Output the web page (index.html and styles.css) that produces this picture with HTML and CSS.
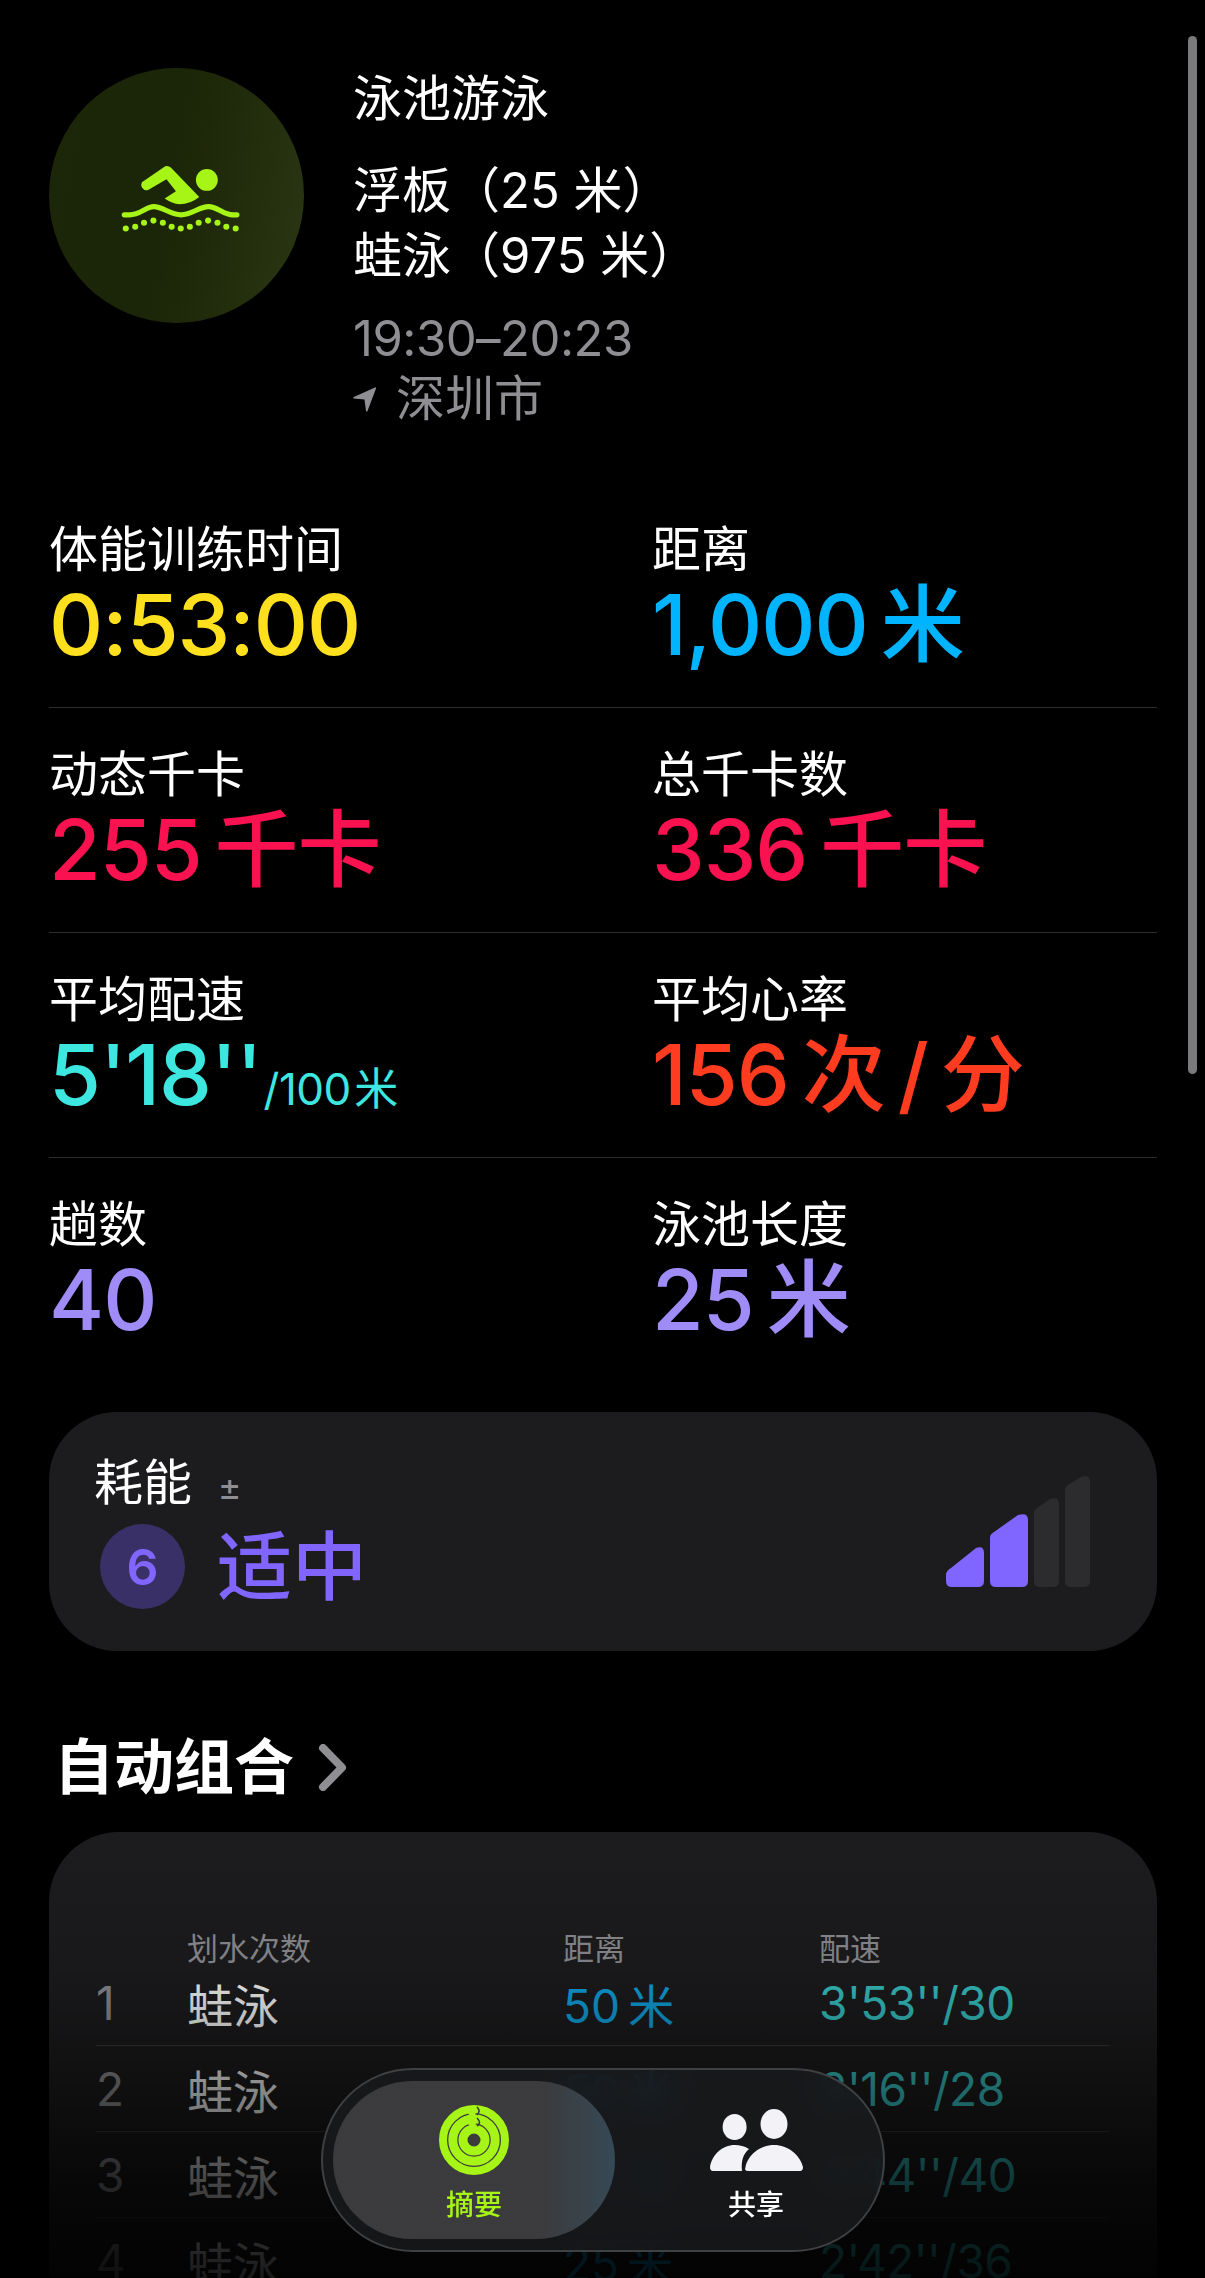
FILE: index.html
```html
<!DOCTYPE html>
<html lang="zh-CN">
<head>
    <meta charset="UTF-8">
    <meta name="viewport" content="width=device-width, initial-scale=1.0">
    <title>泳池游泳</title>
    <link rel="stylesheet" href="styles.css">
</head>
<body>
    <div class="page">
        <header class="summary">
            <div class="activity-icon">
                <svg viewBox="0 0 840 840" width="280" height="280">
                    <path fill="#a6f516" d="M306 375 L378 325 Q390 317 402 327 L495 423 Q465 447 430 447 Q405 445 381 428 L418 404 L387 365 L328 399 Q315 405 306 392 Q302 382 306 375 Z"/>
                    <circle fill="#a6f516" cx="520" cy="367" r="36"/>
                    <path fill="none" stroke="#a6f516" stroke-width="17" stroke-linecap="round" d="M248 482 H265 C300 482 320 455 345 455 C375 455 400 482 435 482 C470 482 495 455 525 455 C555 455 575 482 605 482 H619"/>
                    <g fill="#a6f516">
                        <circle cx="253" cy="527" r="10"/>
                        <circle cx="284" cy="521" r="10"/>
                        <circle cx="313" cy="508" r="10"/>
                        <circle cx="344" cy="501" r="10"/>
                        <circle cx="375" cy="508" r="10"/>
                        <circle cx="404" cy="521" r="10"/>
                        <circle cx="434" cy="527" r="10"/>
                        <circle cx="464" cy="521" r="10"/>
                        <circle cx="493" cy="508" r="10"/>
                        <circle cx="524" cy="501" r="10"/>
                        <circle cx="555" cy="508" r="10"/>
                        <circle cx="584" cy="521" r="10"/>
                        <circle cx="615" cy="527" r="10"/>
                    </g>
                </svg>
            </div>
            <div class="summary-text">
                <div class="summary-title">泳池游泳</div>
                <div class="summary-sets">
                    <div>浮板（25 米）</div>
                    <div>蛙泳（975 米）</div>
                </div>
                <div class="summary-time">19:30–20:23</div>
                <div class="summary-place">
                    <svg viewBox="0 0 23 25" width="23" height="25"><path fill="#8e8e93" d="M22 0.5 Q23.5 0 23 1.5 L14.5 24 Q13.5 25.5 13 24 L11.5 12.5 L0.8 11.5 Q-0.5 11 0.8 10 Z"/></svg>
                    <span>深圳市</span>
                </div>
            </div>
        </header>

        <section class="metrics">
            <div class="metric-row">
                <div class="metric">
                    <div class="metric-label">体能训练时间</div>
                    <div class="metric-value yellow">0:53:00</div>
                </div>
                <div class="metric">
                    <div class="metric-label">距离</div>
                    <div class="metric-value blue">1,000 米</div>
                </div>
            </div>
            <div class="metric-row">
                <div class="metric">
                    <div class="metric-label">动态千卡</div>
                    <div class="metric-value pink">255 千卡</div>
                </div>
                <div class="metric">
                    <div class="metric-label">总千卡数</div>
                    <div class="metric-value pink">336 千卡</div>
                </div>
            </div>
            <div class="metric-row">
                <div class="metric">
                    <div class="metric-label">平均配速</div>
                    <div class="metric-value teal">5'18''<small>/100 米</small></div>
                </div>
                <div class="metric">
                    <div class="metric-label">平均心率</div>
                    <div class="metric-value red">156 次 / 分</div>
                </div>
            </div>
            <div class="metric-row">
                <div class="metric">
                    <div class="metric-label">趟数</div>
                    <div class="metric-value purple">40</div>
                </div>
                <div class="metric">
                    <div class="metric-label">泳池长度</div>
                    <div class="metric-value purple">25 米</div>
                </div>
            </div>
        </section>

        <section class="effort-card">
            <div class="effort-info">
                <div class="effort-label">耗能 <span class="plus-minus">±</span></div>
                <div class="effort-score">
                    <div class="effort-badge">6</div>
                    <div class="effort-word">适中</div>
                </div>
            </div>
            <svg class="effort-bars" viewBox="0 0 144 111" width="144" height="111">
                <path fill="#8066ff" d="M5 92 L30 72 Q38 69 38 77 V105 Q38 111 32 111 H6 Q0 111 0 105 V99 Q0 95 5 92 Z"/>
                <path fill="#8066ff" d="M44 62 Q44 58 48 56 L72 39 Q82 36 82 44 V105 Q82 111 76 111 H50 Q44 111 44 105 Z"/>
                <path fill="#2c2c2e" d="M88 38 Q88 34 91 32 L104 23 Q113 20 113 28 V105 Q113 111 107 111 H94 Q88 111 88 105 Z"/>
                <path fill="#2c2c2e" d="M119 15 Q119 11 122 9 L135 1 Q144 -2 144 6 V105 Q144 111 138 111 H125 Q119 111 119 105 Z"/>
            </svg>
        </section>

        <h2 class="section-title">自动组合
            <svg viewBox="0 0 29 47" width="29" height="47"><path fill="none" stroke="#8e8e93" stroke-width="8" stroke-linecap="round" stroke-linejoin="round" d="M5 4 L24 23.5 L5 43"/></svg>
        </h2>

        <section class="sets-card">
            <div class="set-row set-head">
                <span></span>
                <span>划水次数</span>
                <span>距离</span>
                <span>配速</span>
            </div>
            <div class="set-row">
                <span class="set-num">1</span>
                <span class="set-stroke">蛙泳</span>
                <span class="set-dist">50 米</span>
                <span class="set-pace">3'53''/30</span>
            </div>
            <div class="set-row">
                <span class="set-num">2</span>
                <span class="set-stroke">蛙泳</span>
                <span class="set-dist">50 米</span>
                <span class="set-pace">3'16''/28</span>
            </div>
            <div class="set-row">
                <span class="set-num">3</span>
                <span class="set-stroke">蛙泳</span>
                <span class="set-dist">50 米</span>
                <span class="set-pace">3'44''/40</span>
            </div>
            <div class="set-row">
                <span class="set-num">4</span>
                <span class="set-stroke">蛙泳</span>
                <span class="set-dist">25 米</span>
                <span class="set-pace">2'42''/36</span>
            </div>
        </section>
    </div>

    <div class="scrollbar"></div>
    <div class="bottom-fade"></div>

    <nav class="tabbar">
        <div class="tab tab-active">
            <svg viewBox="0 0 70 70" width="70" height="70">
                <g fill="none" stroke="#a6f516">
                    <circle cx="35" cy="35" r="31" stroke-width="8"/>
                    <circle cx="35" cy="35" r="21.2" stroke-width="9"/>
                    <circle cx="35" cy="35" r="11" stroke-width="9"/>
                </g>
                <path fill="none" stroke="#3a3b3d" stroke-width="1.6" d="M38 2 Q42 6 38 10 M38 13 Q43 18 38 21"/>
                <circle fill="#a6f516" cx="33" cy="6" r="4.5"/>
                <circle fill="#a6f516" cx="33" cy="16" r="5"/>
            </svg>
            <span>摘要</span>
        </div>
        <div class="tab">
            <svg viewBox="0 0 93 62" width="93" height="62">
                <g fill="#f2f2f7">
                    <ellipse cx="24.6" cy="18" rx="12" ry="13"/>
                    <ellipse cx="64" cy="15" rx="13.5" ry="15"/>
                    <path d="M38 62 Q34 62 35.5 58 C38 46 50 36 64 36 C78 36 90 46 93 58 Q93 62 90 62 Z"/>
                    <path d="M3 62 Q0 62 0 58 C2 46 12 36 25 36 C30 36 34 37 39 40 C33 45 31 52 32 62 Z"/>
                </g>
            </svg>
            <span>共享</span>
        </div>
    </nav>
</body>
</html>
```

FILE: styles.css
```css
html, body {
    margin: 0;
    padding: 0;
    background: #000;
}
body {
    width: 1205px;
    height: 2278px;
    overflow: hidden;
    position: relative;
    color: #fff;
    font-family: Inter, "Noto Sans CJK SC", sans-serif;
}
.page {
    padding: 68px 48px 0 49px;
}

/* header */
.summary {
    display: flex;
    gap: 49px;
    height: 415px;
}
.activity-icon {
    width: 255px;
    height: 255px;
    border-radius: 50%;
    background: linear-gradient(100deg, #1c2609 0%, #1b2507 45%, #2b3613 100%);
    flex-shrink: 0;
    display: flex;
    align-items: center;
    justify-content: center;
}
.summary-text {
    font-size: 49px;
    margin-top: 0;
}
.summary-title {
    line-height: 62px;
}
.summary-sets {
    margin-top: 28px;
    line-height: 65px;
}
.summary-time {
    margin-top: 21px;
    line-height: 60px;
    color: #8e8e93;
    letter-spacing: -0.5px;
}
.summary-place {
    display: flex;
    align-items: center;
    gap: 20px;
    line-height: 60px;
    color: #8e8e93;
}

/* metrics */
.metric-row {
    display: grid;
    grid-template-columns: 603px 1fr;
    height: 224px;
    padding-top: 0;
    border-bottom: 1px solid #2c2c2e;
}
.metric-row:last-child {
    border-bottom: none;
}
.metric {
    padding-top: 37px;
}
.metric-label {
    font-size: 49px;
    line-height: 60px;
}
.metric-value {
    font-size: 84px;
    line-height: 90px;
    font-weight: 500;
    word-spacing: -0.1em;
    letter-spacing: -1px;
}
.metric-value small {
    font-size: 44px;
    font-weight: 400;
    letter-spacing: -0.5px;
    margin-left: 2px;
}
.yellow { color: #ffe01f; }
.blue { color: #00b4ff; }
.pink { color: #fa1150; }
.teal { color: #3ee6e0; }
.red { color: #ff3b20; }
.purple { color: #a08cf7; }

/* effort card */
.effort-card {
    margin-top: 30px;
    height: 239px;
    border-radius: 68px;
    background: #1c1c1e;
    display: flex;
    justify-content: space-between;
    align-items: flex-start;
    padding: 0 67px 0 45px;
    box-sizing: border-box;
}
.effort-info {
    padding-top: 40px;
}
.effort-label {
    font-size: 49px;
    line-height: 62px;
}
.plus-minus {
    font-size: 36px;
    color: #8e8e93;
    margin-left: 12px;
}
.effort-score {
    display: flex;
    align-items: center;
    gap: 32px;
    margin-left: 6px;
    margin-top: 6px;
}
.effort-badge {
    width: 85px;
    height: 85px;
    border-radius: 50%;
    background: #3a3068;
    color: #8066ff;
    font-size: 50px;
    font-weight: 600;
    display: flex;
    align-items: center;
    justify-content: center;
}
.effort-word {
    font-size: 75px;
    font-weight: 500;
    line-height: 85px;
    color: #8066ff;
}
.effort-bars {
    margin-top: 64px;
}

/* sets table */
.section-title {
    margin: 81px 0 30px 5px;
    font-size: 60px;
    line-height: 70px;
    font-weight: 700;
    display: flex;
    align-items: center;
    gap: 24px;
}
.sets-card {
    background: #1c1c1e;
    border-radius: 70px 70px 0 0;
    padding: 92px 48px 0 47px;
    height: 445px;
    box-sizing: border-box;
}
.set-row {
    display: grid;
    grid-template-columns: 91px 376px 256px 1fr;
    align-items: center;
    height: 85px;
    border-bottom: 1px solid #38383a;
    font-size: 46px;
    word-spacing: -0.1em;
}
.set-head {
    height: 36px;
    font-size: 31px;
    color: #8e8e93;
    border-bottom: none;
}
.set-row:last-child {
    border-bottom: none;
}
.set-num {
    color: #8e8e93;
}
.set-stroke {
    color: #fff;
}
.set-dist {
    color: #10a5e2;
}
.set-pace {
    color: #38c8c8;
    letter-spacing: -0.5px;
}

/* overlays */
.scrollbar {
    position: absolute;
    left: 1188px;
    top: 36px;
    width: 9px;
    height: 1038px;
    border-radius: 5px;
    background: #7a7a7c;
}
.bottom-fade {
    position: absolute;
    left: 0;
    right: 0;
    top: 1840px;
    bottom: 0;
    background: linear-gradient(to bottom, rgba(0,0,0,0) 0%, rgba(0,0,0,0.12) 30%, rgba(0,0,0,0.5) 60%, rgba(0,0,0,0.75) 80%, rgba(0,0,0,0.9) 100%);
}
.tabbar {
    position: absolute;
    left: 321px;
    top: 2068px;
    width: 564px;
    height: 184px;
    box-sizing: border-box;
    border-radius: 92px;
    border: 2px solid #3f4042;
    background: rgba(26,27,29,0.82);
    backdrop-filter: blur(14px);
    display: flex;
    padding: 11px 10px;
    align-items: stretch;
}
.tab {
    width: 282px;
    border-radius: 80px;
    display: flex;
    flex-direction: column;
    align-items: center;
    justify-content: flex-start;
    padding-top: 24px;
    box-sizing: border-box;
    font-size: 28px;
    font-weight: 500;
    color: #fff;
    flex-shrink: 0;
}
.tab svg {
    height: 70px;
}
.tab span {
    margin-top: 10px;
    line-height: 40px;
}
.tab-active {
    color: #a6f516;
    background: linear-gradient(to right, rgba(66,66,68,0.85) 0%, rgba(66,66,68,0.85) 75%, rgba(60,82,96,0.85) 100%);
}
```
